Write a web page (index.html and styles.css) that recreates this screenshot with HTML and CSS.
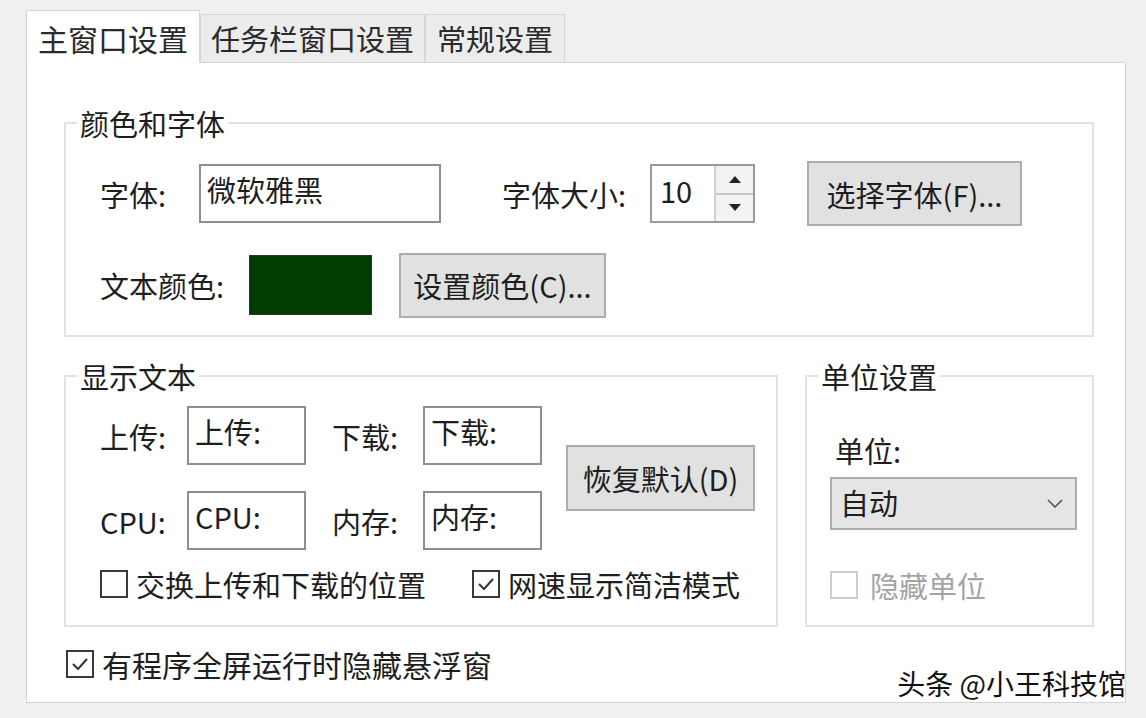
FILE: index.html
```html
<!DOCTYPE html>
<html lang="zh-CN">
<head>
  <meta charset="UTF-8" />
  <title>设置</title>
  <link rel="stylesheet" href="styles.css">
</head>
<body>
  <div class="dialog">
    <div class="tabs">
      <div class="tab active">主窗口设置</div>
      <div class="tab tab-taskbar">任务栏窗口设置</div>
      <div class="tab tab-general">常规设置</div>
    </div>

    <div class="panel">
      <fieldset class="group">
        <legend>颜色和字体</legend>
        <div class="group-body font-body">
          <div class="row row-font">
            <span class="label w-font">字体:</span>
            <input class="field field-font" value="微软雅黑">
            <span class="label w-size">字体大小:</span>
            <div class="spin">
              <input class="spin-value" value="10">
              <div class="spin-btns">
                <span class="spin-btn"><svg width="12" height="7" viewBox="0 0 12 7"><path d="M6 0 L12 7 L0 7 Z" fill="#222"/></svg></span>
                <span class="spin-btn"><svg width="12" height="7" viewBox="0 0 12 7"><path d="M0 0 L12 0 L6 7 Z" fill="#222"/></svg></span>
              </div>
            </div>
            <button class="btn btn-choose">选择字体(F)...</button>
          </div>
          <div class="row row-color">
            <span class="label w-color">文本颜色:</span>
            <span class="swatch"></span>
            <button class="btn btn-color">设置颜色(C)...</button>
          </div>
        </div>
      </fieldset>

      <div class="groups">
        <fieldset class="group group-text">
          <legend>显示文本</legend>
          <div class="group-body text-body">
            <div class="text-main">
              <div class="text-fields">
                <div class="row row-field">
                  <span class="label w-up">上传:</span>
                  <input class="field field-sm" value="上传:">
                  <span class="label w-down">下载:</span>
                  <input class="field field-sm" value="下载:">
                </div>
                <div class="row row-field">
                  <span class="label w-up">CPU:</span>
                  <input class="field field-sm" value="CPU:">
                  <span class="label w-down">内存:</span>
                  <input class="field field-sm" value="内存:">
                </div>
              </div>
              <button class="btn btn-reset">恢复默认(D)</button>
            </div>
            <div class="row row-checks">
              <label class="check"><span class="box"></span>交换上传和下载的位置</label>
              <label class="check check-simple"><span class="box"><svg width="24" height="24" viewBox="0 0 24 24"><path d="M5 12 L10 17 L19 7" fill="none" stroke="#333" stroke-width="2"/></svg></span>网速显示简洁模式</label>
            </div>
          </div>
        </fieldset>

        <fieldset class="group group-unit">
          <legend>单位设置</legend>
          <div class="group-body unit-body">
            <div class="label unit-label">单位:</div>
            <div class="combo">
              <span>自动</span>
              <svg width="16" height="9" viewBox="0 0 16 9"><path d="M1 1 L8 8 L15 1" fill="none" stroke="#555" stroke-width="1.6"/></svg>
            </div>
            <label class="check disabled"><span class="box"></span>隐藏单位</label>
          </div>
        </fieldset>
      </div>

      <label class="check check-full"><span class="box"><svg width="24" height="24" viewBox="0 0 24 24"><path d="M5 12 L10 17 L19 7" fill="none" stroke="#333" stroke-width="2"/></svg></span>有程序全屏运行时隐藏悬浮窗</label>
    </div>
  </div>
  <div class="watermark">头条 @小王科技馆</div>
</body>
</html>
```

FILE: styles.css
```css
body {
  margin: 0;
  background: #f0f0f0;
  font-family: "Noto Sans CJK SC", "Microsoft YaHei", sans-serif;
  font-size: 29px;
  color: #1e1e1e;
  height: 718px;
  overflow: hidden;
  position: relative;
}
.dialog {
  padding: 10px 0 0 26px;
}

/* tabs */
.tabs {
  display: flex;
  align-items: flex-end;
  height: 52px;
}
.tab {
  box-sizing: border-box;
  height: 48px;
  padding-top: 5px;
  border: 1px solid #d6d6d6;
  border-bottom: none;
  background: #ececec;
  line-height: 36px;
  text-align: center;
  color: #2a2a2a;
}
.tab.active {
  width: 174px;
  height: 53px;
  margin-bottom: -1px;
  padding-top: 9px;
  background: #fff;
  font-size: 30px;
  position: relative;
  z-index: 1;
}
.tab-taskbar { width: 225px; }
.tab-general { width: 140px; }

.panel {
  box-sizing: border-box;
  width: 1100px;
  height: 641px;
  background: #fff;
  border: 1px solid #d4d4d4;
  padding: 42px 31px 0 37px;
}

/* group boxes */
.group {
  box-sizing: border-box;
  margin: 0;
  padding: 0;
  min-width: 0;
  border: 2px solid #e2e2e2;
}
.group legend {
  margin-left: 11px;
  padding: 0 3px;
  line-height: 36px;
}
.row {
  display: flex;
  align-items: center;
}
.label { flex: none; line-height: 36px; }

.font-body { padding: 20px 0 17px 34px; }
.row-font { height: 65px; }
.row-color { height: 66px; margin-top: 26px; }
.w-font { width: 99px; }
.w-size { width: 148px; margin-left: 61px; }
.w-color { width: 149px; }

.field {
  box-sizing: border-box;
  height: 59px;
  border: 2px solid #8f8f8f;
  background: #fff;
  font: inherit;
  color: #1e1e1e;
  padding: 0 0 9px 6px;
  outline: none;
}
.field-font { width: 242px; }
.field-sm { width: 119px; padding-bottom: 10px; }

.spin {
  box-sizing: border-box;
  display: flex;
  width: 105px;
  height: 59px;
  border: 2px solid #9a9a9a;
  background: #fff;
}
.spin-value {
  width: 62px;
  border: none;
  font: inherit;
  color: #1e1e1e;
  padding: 0 0 8px 8px;
  outline: none;
  box-sizing: border-box;
}
.spin-btns {
  flex: 1;
  display: flex;
  flex-direction: column;
  border-left: 2px solid #d0d0d0;
}
.spin-btn {
  flex: 1;
  display: flex;
  align-items: center;
  justify-content: center;
  background: #f3f3f3;
}
.spin-btn + .spin-btn { border-top: 2px solid #c8c8c8; }

.btn {
  box-sizing: border-box;
  background: #e1e1e1;
  border: 2px solid #adadad;
  font: inherit;
  color: #1e1e1e;
  padding: 0;
}
.btn-choose { width: 215px; height: 65px; margin-left: 52px; }
.btn-color { width: 207px; height: 65px; margin-left: 27px; }
.btn-reset { width: 189px; height: 66px; margin-left: 24px; }

.swatch {
  box-sizing: border-box;
  width: 123px;
  height: 60px;
  background: #013d01;
  border: 1px solid #2c3a2c;
}

/* lower groups */
.groups {
  display: flex;
  gap: 27px;
  margin-top: 21px;
}
.group-text { width: 714px; flex: none; }
.group-unit { flex: 1; }

.text-body { padding: 12px 0 23px 34px; }
.text-main { display: flex; align-items: center; }
.text-fields { display: flex; flex-direction: column; gap: 26px; }
.row-field { height: 59px; }
.w-up { width: 87px; }
.w-down { width: 91px; margin-left: 26px; }
.row-checks { margin-top: 16px; }

.check {
  display: flex;
  align-items: center;
  gap: 8px;
  line-height: 36px;
}
.box {
  box-sizing: border-box;
  width: 28px;
  height: 28px;
  border: 2px solid #3a3a3a;
  display: flex;
  align-items: center;
  justify-content: center;
  flex: none;
}
.check-simple { margin-left: 46px; }
.check.disabled { color: #a4a4a4; gap: 12px; }
.check.disabled .box { border-color: #cdcdcd; }

.unit-body { padding: 38px 17px 0 23px; }
.unit-label { margin-left: 5px; }
.combo {
  box-sizing: border-box;
  display: flex;
  align-items: center;
  justify-content: space-between;
  width: 247px;
  height: 53px;
  margin-top: 9px;
  padding: 0 12px 4px 8px;
  background: #e5e5e5;
  border: 2px solid #adadad;
}
.combo svg { margin-top: 4px; }
.unit-body .check { margin-top: 37px; }

.check-full { margin: 19px 0 0 2px; font-size: 30px; }

.watermark {
  position: absolute;
  right: 20px;
  top: 664px;
  font-size: 28px;
  line-height: 38px;
  color: #111;
  text-shadow: 0 0 2px #fff, 1px 1px 0 #fff, -1px -1px 0 #fff;
}
```
